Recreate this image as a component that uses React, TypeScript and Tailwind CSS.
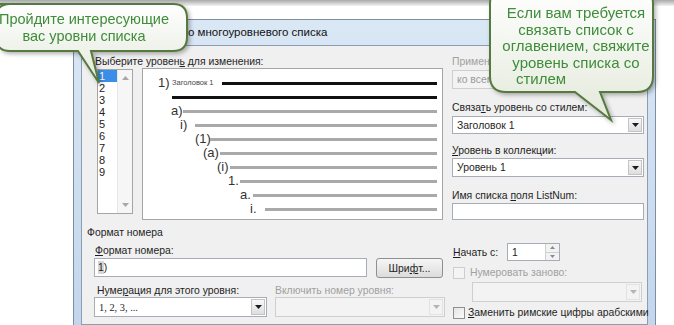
import clsx from "clsx";

const rows = [
  { m: "a)", pad: "pl-[28px]", w: "w-[12px]" },
  { m: "i)", pad: "pl-[37px]", w: "w-[15px]" },
  { m: "(1)", pad: "pl-[52px]", w: "w-[15px]" },
  { m: "(a)", pad: "pl-[60px]", w: "w-[17px]" },
  { m: "(i)", pad: "pl-[74px]", w: "w-[13px]" },
  { m: "1.", pad: "pl-[85px]", w: "w-[12px]" },
  { m: "a.", pad: "pl-[97px]", w: "w-[13px]" },
  { m: "i.", pad: "pl-[107px]", w: "w-[15px]" },
];

const DownTri = ({ color }: { color: string }) => (
  <svg width="7" height="4" viewBox="0 0 7 4">
    <path d="M0 0h7L3.5 4z" fill={color} />
  </svg>
);

function Combo({
  value,
  disabled,
  className,
}: {
  value?: string;
  disabled?: boolean;
  className?: string;
}) {
  return (
    <div
      className={clsx(
        "flex items-stretch border",
        disabled ? "border-[#cfcfcf] bg-[#f3f3f3] text-[#9a9a9a]" : "border-[#a7adb6] bg-white",
        className
      )}
    >
      <div className="flex flex-1 items-center overflow-hidden whitespace-nowrap pl-[4px]">{value}</div>
      <div
        className={clsx(
          "m-[1px] flex w-[14px] items-center justify-center border",
          disabled ? "border-[#e2e2e2] bg-[#f3f3f3]" : "border-[#c4c4c4] bg-gradient-to-b from-[#f8f8f8] to-[#dedede]"
        )}
      >
        <DownTri color={disabled ? "#b4b4b4" : "#1c1c1c"} />
      </div>
    </div>
  );
}

const Check = ({ disabled }: { disabled?: boolean }) => (
  <div
    className={clsx(
      "h-[12px] w-[12px] shrink-0 border",
      disabled ? "border-[#cdcdcd] bg-[#f4f4f4]" : "border-[#8f8f8f] bg-gradient-to-br from-[#e4e4e4] to-[#fbfbfb]"
    )}
  />
);

function ListBox() {
  return (
    <div className="ml-[2px] mt-[1px] flex h-[145px] w-[36px] border border-[#a5a5a5] bg-white text-[11px] leading-[12px]">
      <div className="flex w-[19px] flex-col">
        {[1, 2, 3, 4, 5, 6, 7, 8, 9].map((n) => (
          <div
            key={n}
            className={clsx("h-[12px] pl-[1px]", n === 1 ? "bg-[#3a8ee8] text-white" : "text-[#222]")}
          >
            {n}
          </div>
        ))}
      </div>
      <div className="flex flex-1 flex-col items-center justify-between border-l border-[#e6e6e6] bg-[#f6f6f6] py-[6px]">
        <svg width="7" height="4" viewBox="0 0 7 4">
          <path d="M0 4L3.5 0L7 4z" fill="#a8a8a8" />
        </svg>
        <svg width="7" height="4" viewBox="0 0 7 4">
          <path d="M0 0h7L3.5 4z" fill="#a8a8a8" />
        </svg>
      </div>
    </div>
  );
}

function Preview() {
  return (
    <div className="ml-[9px] flex h-[152px] w-[301px] flex-col border border-[#a5a5a5] bg-white pr-[5px] pt-[7px] text-[13px] leading-[14px] text-[#333]">
      <div className="flex h-[14px] items-center pl-[15px]">
        <span className="w-[14px]">1)</span>
        <span className="w-[50px] whitespace-nowrap text-[7.5px] text-[#444]">Заголовок 1</span>
        <div className="h-[3px] flex-1 bg-[#111]" />
      </div>
      <div className="flex h-[14px] items-center pl-[29px]">
        <div className="h-[3px] flex-1 bg-[#111]" />
      </div>
      {rows.map((r) => (
        <div key={r.m + r.pad} className={clsx("flex h-[14px] items-center", r.pad)}>
          <span className={r.w}>{r.m}</span>
          <div className="h-[3px] flex-1 bg-[#a9a9a9]" />
        </div>
      ))}
    </div>
  );
}

function Bubbles() {
  return (
    <>
      <div className="absolute left-0 top-0 h-[90px] w-[200px] drop-shadow-[2px_2px_2px_rgba(0,0,0,0.3)]">
        <svg width="200" height="90" viewBox="0 0 200 90" className="absolute inset-0">
          <defs>
            <linearGradient id="g1" x1="0" y1="0" x2="0" y2="1">
              <stop offset="0" stopColor="#ffffff" />
              <stop offset="1" stopColor="#e3e9da" />
            </linearGradient>
          </defs>
          <path
            d="M-4 4H173Q187 4 187 18V37Q187 51 173 51H91L99 83L78 51H10Q-4 51 -4 37V18Q-4 4 10 4Z"
            fill="url(#g1)"
            stroke="#55793f"
            strokeWidth="2"
          />
        </svg>
        <div className="absolute left-[-6px] top-[11px] w-[180px] whitespace-nowrap text-center text-[14.5px] leading-[17px] text-[#3f8c3a]">
          <div>Пройдите интересующие</div>
          <div>вас уровни списка</div>
        </div>
      </div>
      <div className="absolute left-[480px] top-0 h-[130px] w-[194px] drop-shadow-[2px_2px_2px_rgba(0,0,0,0.3)]">
        <svg width="194" height="130" viewBox="0 0 194 130" className="absolute inset-0">
          <defs>
            <linearGradient id="g2" x1="0" y1="0" x2="0" y2="1">
              <stop offset="0" stopColor="#ffffff" />
              <stop offset="1" stopColor="#e3e9da" />
            </linearGradient>
          </defs>
          <path
            d="M10 -12H157Q173 -12 173 4V76Q173 92 157 92H120L131 120L95 92H26Q10 92 10 76V4Q10 -12 26 -12Z"
            fill="url(#g2)"
            stroke="#55793f"
            strokeWidth="2"
          />
        </svg>
        <div className="absolute left-[10px] top-[5px] w-[172px] whitespace-nowrap text-center text-[15px] leading-[16.5px] text-[#3f8c3a]">
          <div>Если вам требуется</div>
          <div>связать список с</div>
          <div>оглавением, свяжите</div>
          <div>уровень списка со</div>
          <div className="pr-[70px]">стилем</div>
        </div>
      </div>
    </>
  );
}

export default function App() {
  return (
    <div className="relative h-[325px] w-[674px] overflow-hidden bg-white font-['Liberation_Sans',Arial,sans-serif]">
      <div className="h-[6px] bg-gradient-to-b from-[#a9a9a9] to-[#f4f4f4]" />
      <div className="h-[13px]" />
      <div className="ml-[73px] flex h-[306px] w-[583px] flex-col border-x border-t border-[#7d8ea3] bg-gradient-to-b from-[#dae7f5] to-[#c3d6ec] px-[7px]">
        <div className="flex h-[25px] items-center whitespace-nowrap pl-[2px] text-[11.5px] text-[#111]">
          Определение нового многоуровневого списка
        </div>
        <div className="flex flex-1 flex-col whitespace-nowrap border border-[#8a9db3] bg-[#f0f0f0] text-[10.4px] leading-[13px] text-[#1e1e1e]">
          <div className="flex gap-[9px] pl-[13px] pt-[9px]">
            <div className="flex w-[348px] flex-col">
              <div className="h-[13px]">
                Выберите уровен<u>ь</u> для изменения:
              </div>
              <div className="flex items-start">
                <ListBox />
                <Preview />
              </div>
            </div>
            <div className="flex w-[192px] flex-col">
              <div className="h-[13px] text-[#a0a0a0]">Применить изменения к:</div>
              <Combo disabled value="ко всему списку" className="mt-[2px] h-[19px]" />
              <div className="mt-[12px] h-[13px]">
                Связа<u>т</u>ь уровень со стилем:
              </div>
              <Combo value="Заголовок 1" className="mt-[2px] h-[18px]" />
              <div className="mt-[10px] h-[13px]">
                <u>У</u>ровень в коллекции:
              </div>
              <Combo value="Уровень 1" className="mt-[1px] h-[19px]" />
              <div className="mt-[12px] h-[13px]">
                Имя списка <u>п</u>оля ListNum:
              </div>
              <div className="mt-[1px] h-[17px] border border-[#a7adb6] bg-white" />
            </div>
          </div>

          <div className="mt-[6px] h-[13px] pl-[5px]">Формат номера</div>

          <div className="mt-[4px] flex pl-[12px]">
            <div className="flex w-[351px] flex-col">
              <div className="mt-[1px] h-[13px] pl-[1px]">
                <u>Ф</u>ормат номера:
              </div>
              <div className="mt-[1px] flex items-start">
                <div className="flex h-[19px] w-[273px] items-center border border-[#a7adb6] bg-white pl-[3px]">
                  <span className="bg-[#d6d6d6]">1</span>)
                </div>
                <div className="ml-[9px] flex h-[20px] w-[67px] items-center justify-center rounded-[3px] border border-[#8e8f8f] bg-gradient-to-b from-[#f6f6f6] to-[#dcdcdc]">
                  Шри<u>ф</u>т...
                </div>
              </div>
              <div className="mt-[6px] flex h-[13px]">
                <div className="w-[181px] pl-[3px]">
                  Нуме<u>р</u>ация для этого уровня:
                </div>
                <div className="text-[#a0a0a0]">Включить номер уровня:</div>
              </div>
              <div className="flex">
                <Combo value="1, 2, 3, ..." className="h-[20px] w-[173px] font-['Liberation_Serif',serif]" />
                <Combo disabled className="ml-[8px] h-[20px] w-[170px]" />
              </div>
            </div>

            <div className="ml-[8px] flex w-[191px] flex-col">
              <div className="flex h-[18px] items-center">
                <div className="w-[54px]">
                  <u>Н</u>ачать с:
                </div>
                <div className="flex h-[18px] w-[53px] border border-[#a7adb6] bg-white">
                  <div className="flex flex-1 items-center pl-[4px]">1</div>
                  <div className="flex w-[14px] flex-col border-l border-[#d0d0d0]">
                    <div className="flex flex-1 items-center justify-center border-b border-[#d0d0d0] bg-[#f2f2f2]">
                      <svg width="5" height="3" viewBox="0 0 5 3">
                        <path d="M0 3L2.5 0L5 3z" fill="#8a8a8a" />
                      </svg>
                    </div>
                    <div className="flex flex-1 items-center justify-center bg-[#f2f2f2]">
                      <svg width="5" height="3" viewBox="0 0 5 3">
                        <path d="M0 0h5L2.5 3z" fill="#8a8a8a" />
                      </svg>
                    </div>
                  </div>
                </div>
              </div>
              <div className="mt-[5px] flex h-[13px] items-center gap-[5px] text-[#a0a0a0]">
                <Check disabled />
                <span>Нумеровать заново:</span>
              </div>
              <Combo disabled className="ml-[19px] mt-[3px] h-[20px] w-[170px]" />
              <div className="mt-[4px] flex h-[13px] items-center gap-[3px]">
                <Check />
                <span>
                  <u>З</u>аменить римские цифры арабскими
                </span>
              </div>
            </div>
          </div>
        </div>
      </div>
      <Bubbles />
    </div>
  );
}
